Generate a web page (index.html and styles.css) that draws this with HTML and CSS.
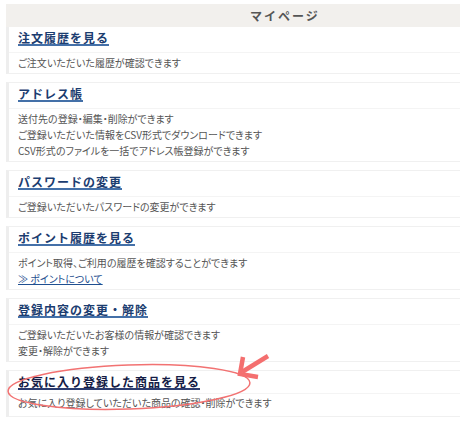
FILE: index.html
```html
<!DOCTYPE html>
<html lang="ja">
<head>
    <meta charset="UTF-8">
    <meta name="viewport" content="width=device-width, initial-scale=1.0">
    <title>マイページ</title>
    <link rel="stylesheet" href="styles.css">
</head>
<body>
    <div class="mypage">
        <h2 class="mypage-title">マイページ</h2>

        <div class="menu-box first">
            <h3 class="menu-head"><a href="#">注文履歴を見る</a></h3>
            <div class="menu-body">
                <p>ご注文いただいた履歴が確認できます</p>
            </div>
        </div>

        <div class="menu-box">
            <h3 class="menu-head"><a href="#">アドレス帳</a></h3>
            <div class="menu-body">
                <p>送付先の登録・編集・削除ができます</p>
                <p>ご登録いただいた情報をCSV形式でダウンロードできます</p>
                <p>CSV形式のファイルを一括でアドレス帳登録ができます</p>
            </div>
        </div>

        <div class="menu-box">
            <h3 class="menu-head"><a href="#">パスワードの変更</a></h3>
            <div class="menu-body">
                <p>ご登録いただいたパスワードの変更ができます</p>
            </div>
        </div>

        <div class="menu-box">
            <h3 class="menu-head"><a href="#">ポイント履歴を見る</a></h3>
            <div class="menu-body">
                <p>ポイント取得、ご利用の履歴を確認することができます</p>
                <p><a class="more-link" href="#">≫ ポイントについて</a></p>
            </div>
        </div>

        <div class="menu-box">
            <h3 class="menu-head"><a href="#">登録内容の変更・解除</a></h3>
            <div class="menu-body">
                <p>ご登録いただいたお客様の情報が確認できます</p>
                <p>変更・解除ができます</p>
            </div>
        </div>

        <div class="menu-box fav">
            <h3 class="menu-head"><a href="#">お気に入り登録した商品を見る</a></h3>
            <div class="menu-body">
                <p>お気に入り登録していただいた商品の確認・削除ができます</p>
            </div>
        </div>
    </div>

    <!-- 手書きの注釈 -->
    <svg class="mark" width="460" height="432" viewBox="0 0 460 432">
        <ellipse cx="129" cy="387" rx="121" ry="22" transform="rotate(-2 129 387)" fill="none" stroke="#f27272" stroke-width="1.5"/>
        <line x1="268" y1="356" x2="242" y2="372" stroke="#f46f6f" stroke-width="4.5"/>
        <polyline points="243,357 240,374 258,377" fill="none" stroke="#f46f6f" stroke-width="4.5"/>
    </svg>
</body>
</html>
```

FILE: styles.css
```css
html, body {
    margin: 0;
    padding: 0;
    background-color: white;
    overflow: hidden;
}
body {
    position: relative;
    width: 460px;
    height: 432px;
    font-family: "Noto Sans CJK JP", sans-serif;
    color: #555;
}
.mypage {
    width: 558px;
    padding: 4px 0 0 6px;
}
.mypage-title {
    margin: 0;
    height: 23px;
    line-height: 24px;
    background-color: #f2f0ed;
    text-align: center;
    font-size: 12px;
    font-weight: bold;
    letter-spacing: 2px;
    color: #555;
}
.menu-box {
    margin-top: 8px;
    border-top: 1px solid #f0f0f0;
    border-bottom: 1px solid #f0f0f0;
    border-left: 3px solid #eeeeee;
}
.menu-box.first {
    margin-top: 0;
    border-top: none;
}
.menu-head {
    margin: 0;
    height: 16px;
    padding: 4px 0 5px 9px;
    border-bottom: 1px solid #f4f4f4;
    font-size: 12px;
    line-height: 13px;
}
.menu-head a {
    display: inline-block;
    vertical-align: top;
    color: #1c3d70;
    text-decoration: none;
    letter-spacing: 1px;
    border-bottom: 2px solid #4470a8;
}
.menu-body {
    padding: 2px 0 2px 9px;
}
.menu-body p {
    margin: 0;
    height: 16px;
    font-size: 10px;
    line-height: 16px;
    font-feature-settings: "palt";
    color: #555;
}
.more-link {
    color: #1f4f90;
    text-decoration: underline;
}
.fav .menu-head {
    padding-bottom: 2px;
}
.fav .menu-head a {
    color: #151c45;
    border-bottom-color: #2d3d70;
}
.fav .menu-body {
    padding: 1px 0 5px 9px;
}
.mark {
    position: absolute;
    left: 0;
    top: 0;
    pointer-events: none;
}
```
